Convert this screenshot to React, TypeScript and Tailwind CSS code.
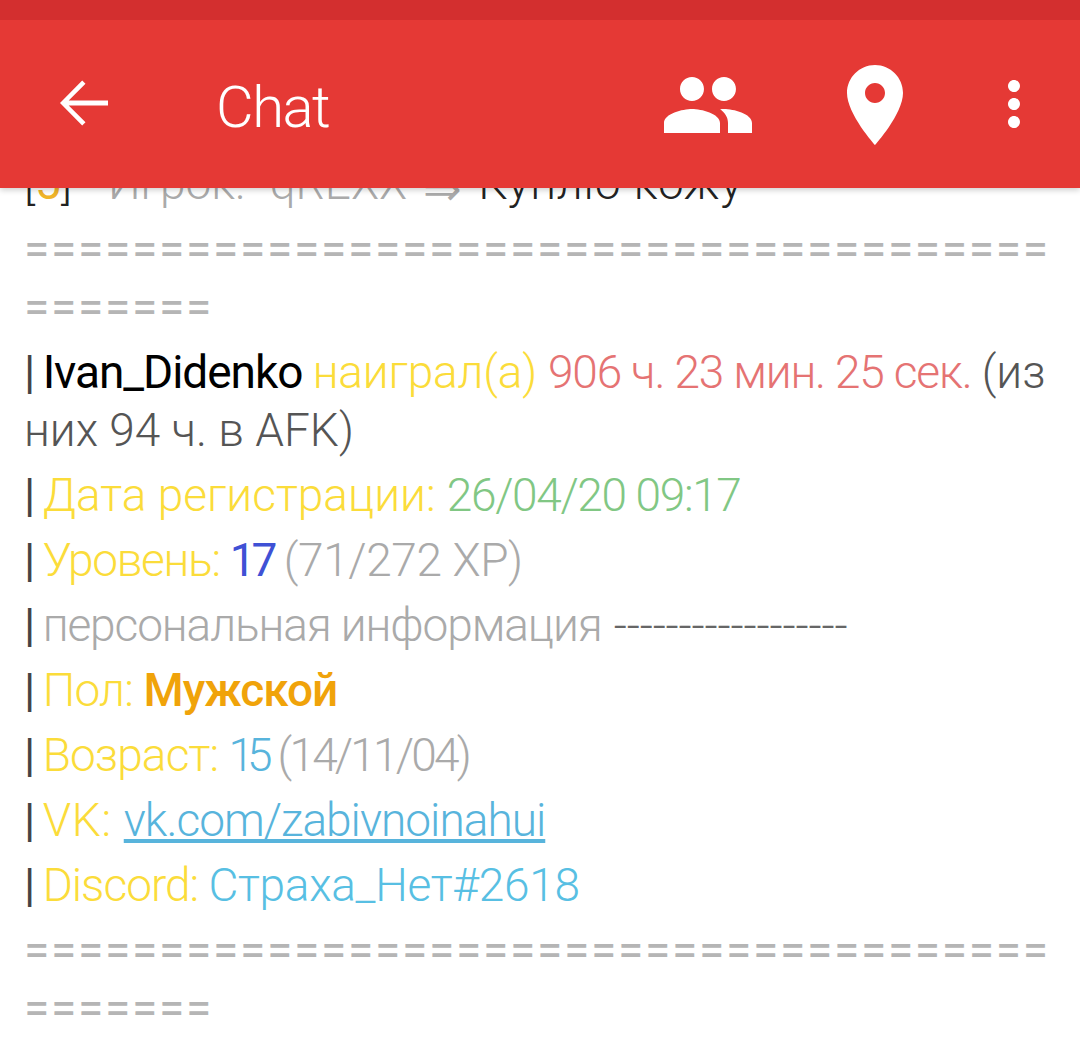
const F = "font-['Roboto',sans-serif]";

function Eq() {
  return (
    <p className="m-0 h-[116px] text-[#b5b5b5] text-[46px] leading-[58px] font-normal tracking-[1.75px] break-all mb-[7px]">
      {"=".repeat(45)}
    </p>
  );
}

function Row({ children, cls = "" }: { children: React.ReactNode; cls?: string }) {
  return <p className={`m-0 mb-[7px] text-[46px] leading-[58px] font-light ${cls}`}>{children}</p>;
}

const Bar = () => <span className="text-[#444] font-normal tracking-[-2px]">| </span>;

export default function App() {
  return (
    <div className={`w-[1080px] h-[1050px] bg-white overflow-hidden flex flex-col ${F}`}>
      <header className="relative z-10 shrink-0 shadow-[0_2px_6px_rgba(0,0,0,0.2)]">
        <div className="h-[20px] bg-[#d32f2f]" />
        <div className="h-[168px] bg-[#e53935] flex items-center text-white">
          <svg viewBox="0 0 24 24" className="w-[72px] h-[72px] ml-[48px] fill-white shrink-0 mt-[-2px]">
            <path d="M20 11.2H6.9l5.6-5.6L11.4 4.5 4 12l7.4 7.5 1.1-1.1-5.6-5.6H20z" />
          </svg>
          <span className="ml-[96px] text-[58px] font-light tracking-[-1.5px] leading-none mt-[6px]">Chat</span>
          <div className="ml-auto flex items-center shrink-0 mt-[2px]">
            <svg viewBox="0 0 24 24" className="w-[96px] h-[96px] fill-white">
              <path d="M16 11c1.66 0 2.99-1.34 2.99-3S17.66 5 16 5c-1.66 0-3 1.34-3 3s1.34 3 3 3zm-8 0c1.66 0 2.99-1.34 2.99-3S9.66 5 8 5C6.34 5 5 6.34 5 8s1.34 3 3 3zm0 2c-2.33 0-7 1.17-7 3.5V19h14v-2.5c0-2.33-4.67-3.5-7-3.5zm8 0c-.29 0-.62.02-.97.05 1.16.84 1.97 1.97 1.97 3.45V19h6v-2.5c0-2.33-4.67-3.5-7-3.5z" />
            </svg>
            <svg viewBox="0 0 24 24" className="w-[96px] h-[96px] fill-white ml-[71px]">
              <path d="M12 2C8.13 2 5 5.13 5 9c0 5.25 7 13 7 13s7-7.75 7-13c0-3.87-3.13-7-7-7zm0 9.5c-1.38 0-2.5-1.12-2.5-2.5s1.12-2.5 2.5-2.5 2.5 1.12 2.5 2.5-1.12 2.5-2.5 2.5z" />
            </svg>
            <svg viewBox="0 0 24 24" className="w-[72px] h-[72px] fill-white ml-[55px] mr-[30px] mt-[-2px]">
              <path d="M12 8c1.1 0 2-.9 2-2s-.9-2-2-2-2 .9-2 2 .9 2 2 2zm0 2c-1.1 0-2 .9-2 2s.9 2 2 2 2-.9 2-2-.9-2-2-2zm0 6c-1.1 0-2 .9-2 2s.9 2 2 2 2-.9 2-2-.9-2-2-2z" />
            </svg>
          </div>
        </div>
      </header>
      <main className="flex-1 min-h-0 overflow-hidden pl-[24px] pr-[16px] -mt-[34px]">
        <Row cls="whitespace-nowrap mb-[8px]">
          <span className="text-[#222]">[</span><span className="text-[#f0b429] font-normal">5</span><span className="text-[#222]">]</span>
          <span className="text-[#aaa] ml-[36px]">Игрок:</span>
          <span className="text-[#aaa] ml-[25px]">qREXX</span>
          <span className="text-[#aaa] ml-[16px] align-[-6px] leading-[0px]">⇒</span>
          <span className="text-[#222] ml-[16px] tracking-[0.8px]">Куплю кожу</span>
        </Row>
        <Eq />
        <Row cls="text-[#555]">
          <Bar /><span className="text-black font-normal tracking-[-1.05px]">Ivan_Didenko </span>
          <span className="text-[#fbdc3a] tracking-[-0.2px]">наиграл(а) </span>
          <span className="text-[#e57373] tracking-[-1.15px]">906 ч. 23 мин. 25 сек. </span>(из них 94 ч. в AFK)
        </Row>
        <Row>
          <Bar /><span className="text-[#fbdc3a]">Дата регистрации: </span>
          <span className="text-[#81c784] tracking-[-1.35px]">26/04/20 09:17</span>
        </Row>
        <Row>
          <Bar /><span className="text-[#fbdc3a] tracking-[-1.3px]">Уровень: </span>
          <span className="text-[#3f51d5] font-normal tracking-[-4px]">17 </span>
          <span className="text-[#aaa] tracking-[-0.4px] ml-[3px]">(71/272 XP)</span>
        </Row>
        <Row>
          <Bar /><span className="text-[#aaa] tracking-[-1.1px]">персональная информация </span>
          <span className="text-[#666] tracking-[-0.2px] ml-[2px]">------------------</span>
        </Row>
        <Row>
          <Bar /><span className="text-[#fbdc3a] tracking-[-0.8px]">Пол: </span>
          <span className="text-[#f0a30a] font-medium tracking-[-1px]">Мужской</span>
        </Row>
        <Row>
          <Bar /><span className="text-[#fbdc3a] tracking-[-0.9px]">Возраст: </span>
          <span className="text-[#58b4dc] tracking-[-7px]">15</span>
          <span className="text-[#aaa] tracking-[-2.8px] ml-[12px]">(14/11/04)</span>
        </Row>
        <Row>
          <Bar /><span className="text-[#fbdc3a] tracking-[0.7px]">VK: </span>
          <span className="text-[#58b4dc] underline tracking-[-1px]">vk.com/zabivnoinahui</span>
        </Row>
        <Row>
          <Bar /><span className="text-[#fbdc3a] tracking-[-1px]">Discord: </span>
          <span className="text-[#58bfe3] tracking-[-0.3px]">Страха_Нет#2618</span>
        </Row>
        <Eq />
      </main>
    </div>
  );
}
